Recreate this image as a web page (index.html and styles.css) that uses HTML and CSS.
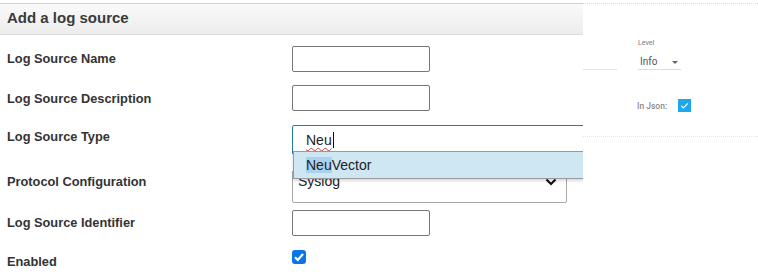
FILE: index.html
```html
<!DOCTYPE html>
<html>
<head>
<meta charset="utf-8">
<link rel="stylesheet" href="styles.css">
</head>
<body>
<div class="page">
  <section class="panel">
    <header class="panel-head">Add a log source</header>
    <div class="form">
      <div class="row r1">
        <label class="lbl">Log Source Name</label>
        <div class="ctl"><input class="txt" type="text"></div>
      </div>
      <div class="row r2">
        <label class="lbl">Log Source Description</label>
        <div class="ctl"><input class="txt" type="text"></div>
      </div>
      <div class="row r3">
        <label class="lbl">Log Source Type</label>
        <div class="ctl ctl-type">
          <div class="type-input"><span class="typed">Neu</span><span class="caret"></span></div>
          <div class="suggest"><span class="hit">Neu</span>Vector</div>
        </div>
      </div>
      <div class="row r4">
        <label class="lbl">Protocol Configuration</label>
        <div class="ctl">
          <div class="select"><span>Syslog</span>
            <svg class="chev" width="12" height="8" viewBox="0 0 12 8"><path d="M1.5 1.5 L6 6 L10.5 1.5" fill="none" stroke="#111" stroke-width="2.2"/></svg>
          </div>
        </div>
      </div>
      <div class="row r5">
        <label class="lbl">Log Source Identifier</label>
        <div class="ctl"><input class="txt" type="text"></div>
      </div>
      <div class="row r6">
        <label class="lbl lbl-low">Enabled</label>
        <div class="ctl">
          <span class="chk">
            <svg width="14" height="14" viewBox="0 0 14 14"><path d="M3 7.2 L5.8 10 L11 4" fill="none" stroke="#fff" stroke-width="2.2"/></svg>
          </span>
        </div>
      </div>
    </div>
  </section>
  <aside class="side">
    <div class="side-top"></div>
    <div class="side-body">
      <div class="stub-line"></div>
      <div class="level">
        <div class="level-lbl">Level</div>
        <div class="level-sel"><span>Info</span><span class="tri"></span></div>
      </div>
    </div>
    <div class="json">
      <span class="json-lbl">In Json:</span>
      <span class="json-chk">
        <svg width="13" height="13" viewBox="0 0 13 13"><path d="M3.2 6.8 L5.4 9 L9.8 4.4" fill="none" stroke="#fff" stroke-width="1.2"/></svg>
      </span>
    </div>
    <div class="side-bottom"></div>
  </aside>
</div>
</body>
</html>
```
FILE: styles.css
```css
html, body {
  margin: 0;
  padding: 0;
  background: #fff;
}
.page {
  display: flex;
  width: 758px;
  height: 279px;
  overflow: hidden;
}
.panel {
  width: 583px;
  flex: none;
  overflow: hidden;
  position: relative;
  font-family: "Liberation Sans", Arial, sans-serif;
  color: #333;
}
.panel-head {
  margin-top: 3px;
  height: 30px;
  border-top: 1px solid #d2d2d2;
  border-bottom: 1px solid #dcdcdc;
  background: linear-gradient(#fafafa, #ececec);
  font-weight: bold;
  font-size: 15px;
  line-height: 28px;
  padding-left: 7px;
  color: #3a3a3a;
}
.form {
  display: flex;
  flex-direction: column;
}
.row {
  display: flex;
  align-items: center;
}
.r1 { height: 39px; margin-top: 4px; }
.r2 { height: 40px; }
.r3 { height: 37px; }
.r4 { height: 52px; }
.r5 { height: 31px; }
.r6 { height: 40px; }
.lbl {
  width: 285px;
  padding-left: 7px;
  flex: none;
  font-weight: bold;
  font-size: 12.8px;
  color: #333;
}
.lbl-low { margin-top: 6px; }
.ctl {
  display: flex;
  align-items: center;
}
.txt {
  box-sizing: border-box;
  width: 138px;
  height: 26px;
  border: 1px solid #767676;
  border-radius: 2px;
  margin: 0;
  padding: 0;
  background: #fff;
}
.ctl-type {
  position: relative;
  align-self: flex-start;
  margin-top: 7px;
}
.type-input {
  box-sizing: border-box;
  width: 320px;
  height: 30px;
  border: 1px solid #2a7aa8;
  border-radius: 2px;
  padding-left: 13px;
  display: flex;
  align-items: center;
  font-size: 14px;
  color: #222;
}
.typed {
  text-decoration: underline wavy #d04040;
  text-decoration-thickness: 1px;
  text-underline-offset: 2px;
}
.caret {
  display: inline-block;
  width: 1px;
  height: 16px;
  background: #111;
  margin-left: 1px;
}
.suggest {
  position: absolute;
  left: 1px;
  top: 26px;
  z-index: 2;
  box-sizing: border-box;
  width: 320px;
  height: 28px;
  border: 1px solid #9a9a9a;
  background: #cfe6f3;
  box-shadow: 0 2px 3px rgba(0,0,0,0.15);
  padding-left: 12px;
  display: flex;
  align-items: center;
  font-size: 14px;
  color: #222;
}
.hit {
  background: #a9d2ee;
}
.select {
  box-sizing: border-box;
  width: 275px;
  height: 33px;
  margin-top: 10px;
  border: 1px solid #a8a8a8;
  border-radius: 2px;
  padding: 2px 9px 0 5px;
  display: flex;
  align-items: flex-start;
  justify-content: space-between;
  font-size: 14px;
  line-height: 16px;
  color: #222;
}
.chev {
  margin-top: 5px;
}
.chk {
  width: 14px;
  height: 14px;
  border-radius: 3px;
  background: #0b75e8;
  display: flex;
  margin-bottom: 2px;
}
.side {
  flex: 1;
  position: relative;
  font-family: Roboto, "Liberation Sans", sans-serif;
  background: #fff;
}
.side-top {
  margin-top: 3px;
  border-top: 1px dotted #cfe0ec;
}
.side-body {
  display: flex;
  align-items: flex-end;
  margin-top: 35px;
  gap: 21px;
}
.stub-line {
  width: 34px;
  height: 1px;
  background: #dce6ee;
  margin-bottom: 0;
}
.level {
  display: flex;
  flex-direction: column;
}
.level-lbl {
  font-size: 7px;
  color: #777;
  line-height: 9px;
  margin-bottom: 8px;
}
.level-sel {
  width: 43px;
  height: 14px;
  border-bottom: 1px solid #dedede;
  display: flex;
  align-items: flex-start;
  gap: 15px;
  font-size: 10px;
  color: #555;
  padding-left: 2px;
  box-sizing: border-box;
  line-height: 12px;
}
.tri {
  margin-top: 5px;
  width: 0;
  height: 0;
  border-left: 3px solid transparent;
  border-right: 3px solid transparent;
  border-top: 3px solid #666;
}
.json {
  display: flex;
  align-items: center;
  gap: 11px;
  margin-top: 29px;
  margin-left: 54px;
}
.json-lbl {
  font-size: 8.5px;
  font-weight: 500;
  color: #8a8a8a;
}
.json-chk {
  width: 13px;
  height: 13px;
  background: #1ea7ec;
  display: flex;
}
.side-bottom {
  margin-top: 24px;
  border-top: 1px dotted #dfe6ec;
}
```
